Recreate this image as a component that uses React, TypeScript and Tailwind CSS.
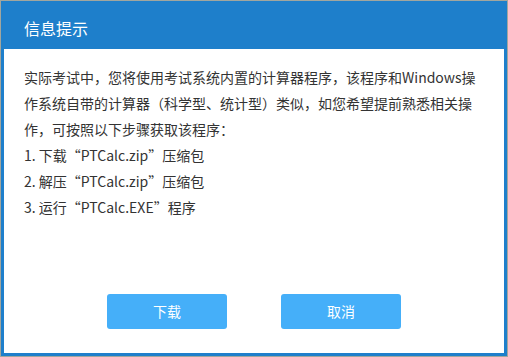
export default function App() {
  const font = { fontFamily: '"Microsoft YaHei", "Noto Sans CJK SC", "Noto Sans", sans-serif' };
  return (
    <div
      className="w-[508px] h-[357px] border border-[#a2a69e] bg-[#a2a69e]"
      style={font}
    >
      <div className="flex h-full flex-col border-[3px] border-t-0 border-[#1e7fcb] bg-white">
        <div className="flex h-[48px] shrink-0 items-center bg-[#1e7fcb] pl-[20px] pt-[6px] text-[16px] leading-[22px] text-white">
          信息提示
        </div>
        <div className="flex-1 pl-[20px] pt-[15px] text-[14px] leading-[26px] text-[#333333]">
          <div className="whitespace-nowrap">实际考试中，您将使用考试系统内置的计算器程序，该程序和Windows操</div>
          <div className="whitespace-nowrap">作系统自带的计算器（科学型、统计型）类似，如您希望提前熟悉相关操</div>
          <div className="whitespace-nowrap">作，可按照以下步骤获取该程序：</div>
          <div className="whitespace-nowrap">1. 下载“PTCalc.zip”压缩包</div>
          <div className="whitespace-nowrap">2. 解压“PTCalc.zip”压缩包</div>
          <div className="whitespace-nowrap">3. 运行“PTCalc.EXE”程序</div>
        </div>
        <div className="flex shrink-0 justify-center gap-[54px] pb-[24px]">
          <button className="h-[35px] w-[120px] rounded-[3px] bg-[#45aff9] text-[14px] text-white">
            下载
          </button>
          <button className="h-[35px] w-[120px] rounded-[3px] bg-[#45aff9] text-[14px] text-white">
            取消
          </button>
        </div>
      </div>
    </div>
  );
}
